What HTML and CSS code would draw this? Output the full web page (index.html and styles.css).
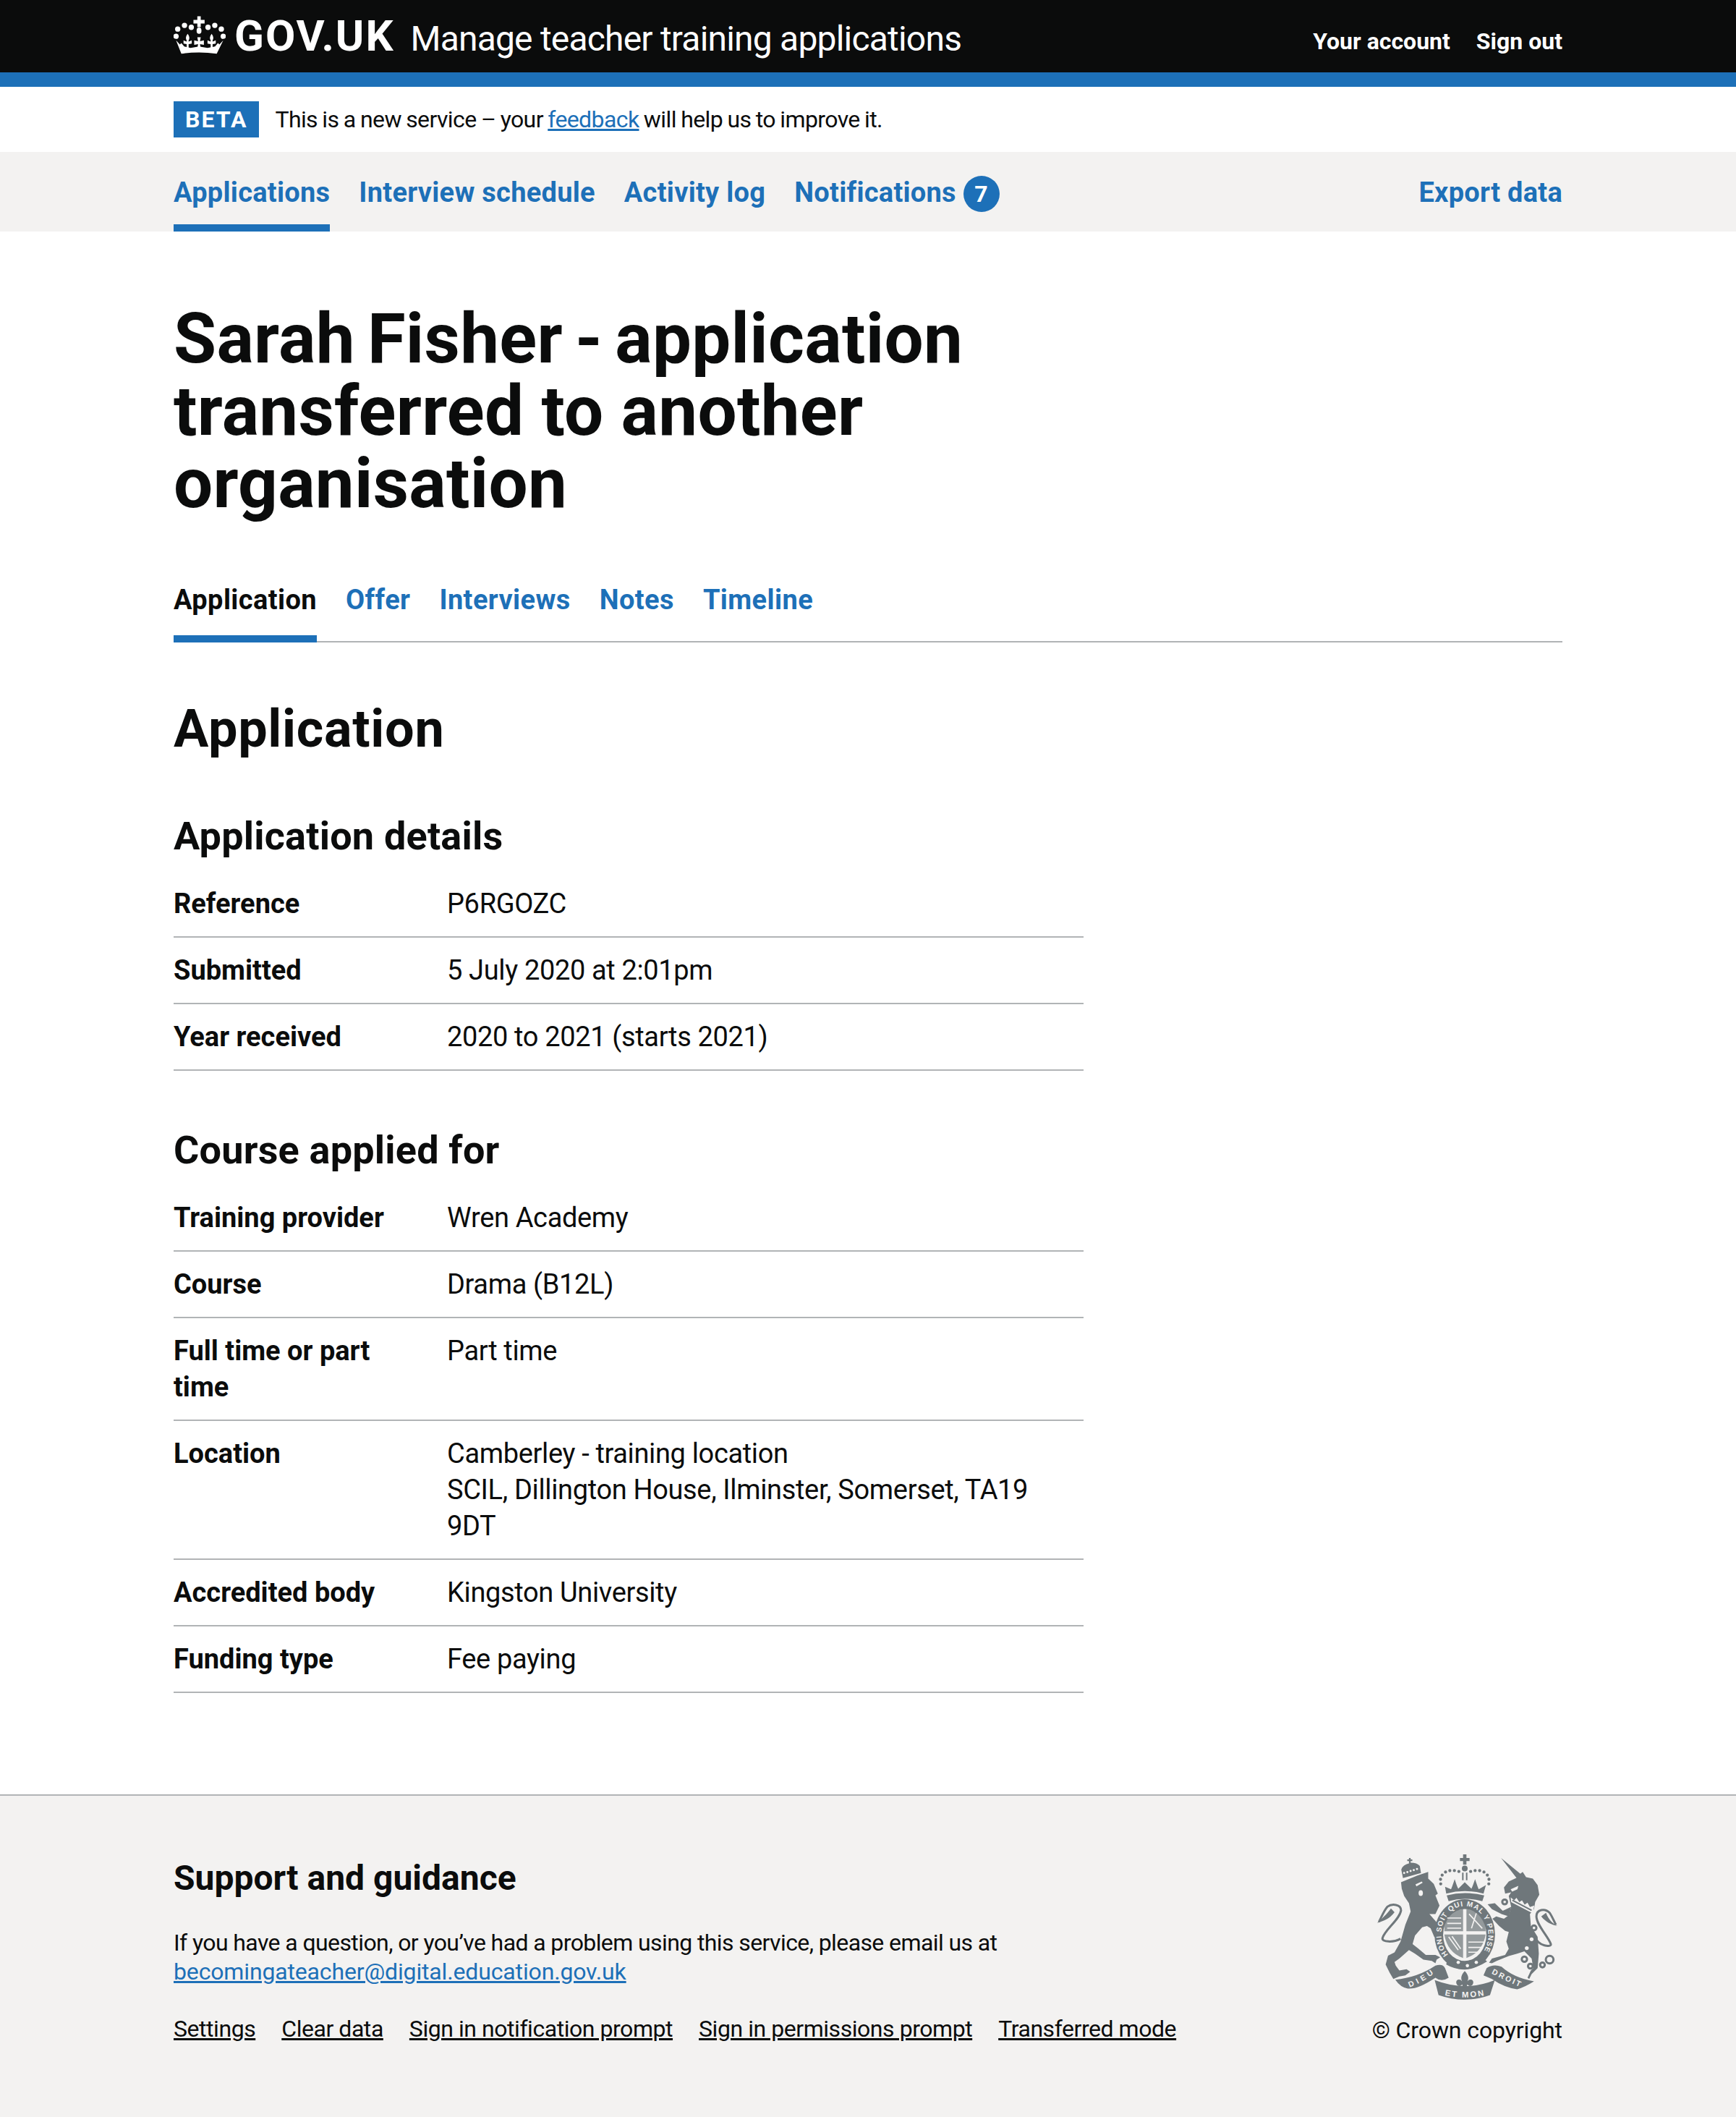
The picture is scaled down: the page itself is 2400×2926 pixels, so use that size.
FILE: index.html
```html
<!DOCTYPE html>
<html lang="en">
<head>
    <meta charset="UTF-8">
    <title>Sarah Fisher - application transferred to another organisation</title>
    <link rel="stylesheet" href="styles.css">
</head>
<body>

    <!-- header -->
    <header class="header">
        <div class="wrap header-inner">
            <a class="logo" href="#">
                <svg class="crown" viewBox="30 25 215 170" width="72" height="57" fill="#fff">
                    <path d="M128 35h14v15h16v15h-16v15h-14V65h-16V50h16z"/>
                    <ellipse cx="135" cy="95" rx="10" ry="13"/>
                    <circle cx="75" cy="73" r="11"/><circle cx="103" cy="81" r="11"/>
                    <circle cx="47" cy="88" r="11"/><circle cx="40" cy="118" r="11"/>
                    <circle cx="172" cy="81" r="11"/><circle cx="200" cy="73" r="11"/>
                    <circle cx="227" cy="88" r="11"/><circle cx="235" cy="118" r="11"/>
                    <path d="M40 135L56 152 62 146 74 160 100 166 135 160 170 166 201 160 213 146 219 152 235 135 208 190Q135 180 62 190Z"/>
                    <path d="M88 108C96 118 97 128 92 135V140L105 135V148L92 150V170H84V150L71 148V135L84 140V135C79 128 80 118 88 108Z"/>
                    <path d="M187 108C195 118 196 128 191 135V140L204 135V148L191 150V170H183V150L170 148V135L183 140V135C178 128 179 118 187 108Z"/>
                    <path d="M128 122h14l-3 16 16-3v18l-16-3 3 18h-14l3-18-16 3v-18l16 3z"/>
                </svg>
                <span class="logo-text">GOV.UK</span>
            </a>
            <a class="service-name" href="#">Manage teacher training applications</a>
            <nav class="account-nav">
                <a href="#">Your account</a>
                <a href="#">Sign out</a>
            </nav>
        </div>
    </header>

    <!-- phase banner -->
    <div class="wrap phase">
        <strong class="tag">BETA</strong>
        <span class="phase-text">This is a new service – your <a href="#">feedback</a> will help us to improve it.</span>
    </div>

    <!-- primary nav -->
    <div class="primary-nav">
        <div class="wrap primary-inner">
            <a class="nav-item current" href="#">Applications</a>
            <a class="nav-item" href="#">Interview schedule</a>
            <a class="nav-item" href="#">Activity log</a>
            <a class="nav-item" href="#">Notifications <span class="count">7</span></a>
            <a class="nav-item export" href="#">Export data</a>
        </div>
    </div>

    <main class="wrap main">
        <h1><span class="title-first">Sarah Fisher - application</span> transferred to another organisation</h1>

        <nav class="sub-nav">
            <a class="current" href="#">Application</a>
            <a href="#">Offer</a>
            <a href="#">Interviews</a>
            <a href="#">Notes</a>
            <a href="#">Timeline</a>
        </nav>

        <h2 class="page-heading">Application</h2>

        <h3>Application details</h3>
        <dl class="summary">
            <div class="row"><dt>Reference</dt><dd>P6RGOZC</dd></div>
            <div class="row"><dt>Submitted</dt><dd>5 July 2020 at 2:01pm</dd></div>
            <div class="row"><dt>Year received</dt><dd>2020 to 2021 (starts 2021)</dd></div>
        </dl>

        <h3>Course applied for</h3>
        <dl class="summary">
            <div class="row"><dt>Training provider</dt><dd>Wren Academy</dd></div>
            <div class="row"><dt>Course</dt><dd>Drama (B12L)</dd></div>
            <div class="row"><dt>Full time or part time</dt><dd>Part time</dd></div>
            <div class="row"><dt>Location</dt><dd>Camberley - training location<br>SCIL, Dillington House, Ilminster, Somerset, TA19 9DT</dd></div>
            <div class="row"><dt>Accredited body</dt><dd>Kingston University</dd></div>
            <div class="row"><dt>Funding type</dt><dd>Fee paying</dd></div>
        </dl>
    </main>

    <!-- footer -->
    <footer class="footer">
        <div class="wrap footer-inner">
            <div class="footer-main">
                <h2>Support and guidance</h2>
                <p>If you have a question, or you’ve had a problem using this service, please email us at <a class="mail" href="#">becomingateacher@digital.education.gov.uk</a></p>
                <ul class="footer-links">
                    <li><a href="#">Settings</a></li>
                    <li><a href="#">Clear data</a></li>
                    <li><a href="#">Sign in notification prompt</a></li>
                    <li><a href="#">Sign in permissions prompt</a></li>
                    <li><a href="#">Transferred mode</a></li>
                </ul>
            </div>
            <div class="copyright">
                <!-- royal arms, traced in the coordinates of a 3x crop -->
                <svg class="crest" viewBox="130 125 752 612" width="250" height="204">
                    <g fill="#6f777b">
                        <!-- lion -->
                        <path d="M232 243L300 215 345 200V228L368 250 385 290 375 298 392 340 375 375H350L385 415 405 470 385 480 370 470 355 435 340 425 320 430 290 465 280 500 305 520 335 545H375L395 555 380 565 375 580 360 570 325 565 290 540 265 525 225 560 205 575 210 590 225 610 255 605 270 615 250 630 225 635 200 645 185 620 168 585 178 548 205 535 230 490 250 420 272 365 265 330 245 300 235 270Z"/>
                        <path d="M240 226L233 190Q240 170 265 165V155H258V148H265V142H272V148H279V155H272V162Q298 162 310 175L315 205Z"/>
                        <!-- crown over the shield -->
                        <path d="M490 127H504V142H517V155H504V170H490V155H477V142H490Z"/>
                        <circle cx="497" cy="186" r="12"/>
                        <path d="M486 203H492V235H486ZM502 203H508V235H502Z"/>
                        <path d="M415 262L440 272C446 258 450 245 455 230 460 245 464 258 470 270L497 243 525 270C530 258 535 245 540 230 545 245 549 258 555 272L585 255 575 290Q497 270 420 290Z"/>
                        <path d="M422 298Q497 278 578 298L570 322Q497 302 430 322Z"/>
                        <!-- garter ring -->
                        <ellipse cx="497" cy="460" rx="126" ry="146"/>
                        <path d="M425 560Q497 610 575 560L590 572Q497 630 420 585Z"/>
                        <!-- scrolls -->
                        <path d="M208 648Q300 640 375 590 405 580 415 600L430 640Q400 660 375 640 300 690 260 685 230 680 208 648Z"/>
                        <path d="M575 630L588 600Q615 582 650 594 700 640 785 655 745 680 715 688 660 680 610 645Z"/>
                        <path d="M372 650L388 712Q497 750 602 712L622 650Q500 700 372 650Z"/>
                        <path d="M497 612C512 628 515 642 508 655 518 640 540 648 530 668 524 678 512 675 508 668L503 682H491L486 668C482 675 470 678 464 668 454 648 476 640 486 655 479 642 482 628 497 612Z"/>
                        <!-- unicorn -->
                        <path d="M648 142L728 208 738 200 752 222 780 228 800 255 807 295 790 325 785 355 768 375 772 425 800 470 805 540 800 600 775 625 765 645 758 640 772 610 782 600 775 560 745 530 715 540 680 550 630 570 610 580 598 578 610 560 665 545 680 520 670 490 680 450 665 445 640 425 612 395 628 385 660 395 680 380 690 345 680 300 690 285 665 290 660 265 680 240 712 225Z"/>
                        <path d="M592 335L622 330 655 362 690 345 680 385 650 375 610 355Z"/>
                    </g>
                    <!-- tails, chain and crown beads -->
                    <g fill="none" stroke="#6f777b" stroke-width="9">
                        <path d="M230 478C200 495 150 492 155 475 165 440 225 400 232 360 232 335 195 330 175 345 160 362 150 390 140 408"/>
                        <path d="M790 470C800 510 860 515 855 500 845 470 795 420 795 385 795 355 830 350 850 370 862 388 868 405 876 420"/>
                        <circle cx="663" cy="325" r="10"/><circle cx="650" cy="410" r="10"/>
                        <circle cx="785" cy="433" r="10"/><circle cx="745" cy="563" r="11"/>
                        <circle cx="770" cy="592" r="10"/><circle cx="820" cy="587" r="10"/>
                        <circle cx="850" cy="565" r="16"/>
                    </g>
                    <path d="M397 250C388 205 430 178 490 205M597 250C606 205 564 178 504 205" fill="none" stroke="#6f777b" stroke-width="13" stroke-linecap="round" stroke-dasharray="0 19"/>
                    <path d="M133 412C150 395 175 375 190 352L205 368C185 395 160 405 133 412ZM882 425C865 415 845 400 835 370L815 385C835 410 860 420 882 425Z" fill="#6f777b"/>
                    <!-- details cut out of the shapes -->
                    <g fill="#f3f2f1">
                        <ellipse cx="314" cy="288" rx="9" ry="12"/>
                        <path d="M292 252L318 240 322 245 296 260ZM688 272L720 258 716 272 694 282Z"/>
                        <circle cx="775" cy="480" r="8"/><circle cx="755" cy="517" r="8"/>
                        <ellipse cx="497" cy="462" rx="90" ry="108"/>
                    </g>
                    <path d="M688 306L703 318 712 308 724 326 735 318 746 336 758 328 768 346 786 340 780 372 690 326Z" fill="#f3f2f1"/>
                    <path d="M695 318L775 360" fill="none" stroke="#6f777b" stroke-width="6"/>
                    <path d="M245 205L305 186" fill="none" stroke="#f3f2f1" stroke-width="9" stroke-linecap="round" stroke-dasharray="0 14"/>
                    <path d="M418 380Q450 358 490 355V447H412Q412 410 418 380ZM504 355Q545 358 578 380 584 410 584 447H504ZM412 460H490V558Q425 535 412 460ZM504 460H584Q570 535 504 558Z" fill="#6f777b" opacity=".72"/>
                    <g fill="none" stroke="#f3f2f1" stroke-width="5">
                        <path d="M424 392H482M424 414H482M424 434H482M512 492H576M512 514H572M512 534H556"/>
                        <path d="M430 470L470 525M444 468L480 520M515 375L570 435M545 372L525 435"/>
                    </g>
                    <g fill="#f3f2f1">
                        <circle cx="470" cy="576" r="7"/><circle cx="508" cy="590" r="7"/><circle cx="545" cy="576" r="7"/>
                    </g>
                    <!-- lettering -->
                    <path id="garter" d="M428 544A98 118 0 1 1 566 544" fill="none"/>
                    <path id="scroll-left" d="M268 680Q320 660 372 620" fill="none"/>
                    <path id="scroll-right" d="M608 622Q660 650 730 680" fill="none"/>
                    <path id="scroll-mid" d="M392 708Q497 736 602 708" fill="none"/>
                    <g class="crest-text">
                        <text font-size="30"><textPath href="#garter" textLength="500">HONI SOIT QUI MAL Y PENSE</textPath></text>
                        <text font-size="32"><textPath href="#scroll-left" textLength="115">DIEU</textPath></text>
                        <text font-size="32"><textPath href="#scroll-right" textLength="130">DROIT</textPath></text>
                        <text font-size="34"><textPath href="#scroll-mid" startOffset="22" textLength="165">ET MON</textPath></text>
                    </g>
                </svg>
                <span class="copy-text">© Crown copyright</span>
            </div>
        </div>
    </footer>

</body>
</html>
```

FILE: styles.css
```css
* {
    box-sizing: border-box;
}
body {
    font-family: Roboto, Arial, sans-serif;
    font-size: 38px;
    line-height: 50px;
    color: #0b0c0c;
    margin: 0;
    background-color: #fff;
}
a {
    color: #1d70b8;
}
.wrap {
    width: 1920px;
    margin: 0 auto;
}

/* header */
.header {
    height: 120px;
    background-color: #0b0c0c;
    border-bottom: 20px solid #1d70b8;
}
.header-inner {
    display: flex;
    align-items: center;
    height: 100px;
}
.header a {
    color: #fff;
    text-decoration: none;
}
.logo {
    display: flex;
    align-items: center;
    margin-right: 22px;
}
.crown {
    margin-right: 12px;
    margin-bottom: 6px;
}
.logo-text {
    font-size: 60px;
    font-weight: 700;
    letter-spacing: 2px;
}
.service-name {
    font-size: 48px;
    letter-spacing: -.8px;
    padding-top: 8px;
}
.account-nav {
    margin-left: auto;
    display: flex;
    gap: 36px;
    font-size: 32px;
    font-weight: 700;
    padding-top: 14px;
}

/* phase banner */
.phase {
    display: flex;
    align-items: center;
    height: 90px;
    font-size: 32px;
}
.phase-text {
    letter-spacing: -.6px;
    word-spacing: -1px;
}
.tag {
    background-color: #1d70b8;
    color: #fff;
    font-size: 32px;
    line-height: 50px;
    padding: 0 16px;
    letter-spacing: 2px;
    margin-right: 22px;
}

/* primary nav */
.primary-nav {
    height: 110px;
    background-color: #f3f2f1;
}
.primary-inner {
    display: flex;
    height: 110px;
    gap: 40px;
}
.nav-item {
    display: block;
    font-weight: 700;
    letter-spacing: .27px;
    text-decoration: none;
    padding-top: 31px;
    height: 110px;
}
.nav-item.current {
    border-bottom: 10px solid #1d70b8;
}
.export {
    margin-left: auto;
}
.count {
    display: inline-block;
    width: 50px;
    height: 50px;
    border-radius: 50%;
    background-color: #1d70b8;
    color: #fff;
    font-size: 32px;
    line-height: 50px;
    text-align: center;
}

/* main */
.main {
    padding-top: 98px;
    padding-bottom: 60px;
}
h1 {
    font-size: 96px;
    line-height: 100px;
    font-weight: 700;
    letter-spacing: .3px;
    width: 1260px;
    margin: 0 0 85px;
}
.title-first {
    display: block;
    word-spacing: -7px;
}
.sub-nav {
    display: flex;
    gap: 40px;
    height: 85px;
    border-bottom: 2px solid #b1b4b6;
    font-weight: 700;
    letter-spacing: .4px;
    margin-bottom: 80px;
}
.sub-nav a {
    display: block;
    height: 85px;
    padding-top: 1px;
    text-decoration: none;
}
.sub-nav a.current {
    color: #0b0c0c;
    border-bottom: 10px solid #1d70b8;
}
.page-heading {
    font-size: 72px;
    line-height: 80px;
    font-weight: 700;
    letter-spacing: .7px;
    margin: 0 0 78px;
}
h3 {
    font-size: 54px;
    line-height: 60px;
    font-weight: 700;
    letter-spacing: .2px;
    margin: 0 0 18px;
}
.summary {
    width: 1258px;
    margin: 0 0 80px;
}
.row {
    display: flex;
    border-bottom: 2px solid #b1b4b6;
    padding: 20px 0 20px;
}
dt {
    width: 378px;
    padding-right: 40px;
    font-weight: 700;
}
dd {
    flex: 1;
    margin: 0;
    padding-right: 40px;
    letter-spacing: -.35px;
}

/* footer */
.footer {
    background-color: #f3f2f1;
    border-top: 2px solid #b1b4b6;
    height: 446px;
    padding-top: 84px;
    font-size: 32px;
    line-height: 40px;
}
.footer-inner {
    display: flex;
    justify-content: space-between;
}
.footer h2 {
    font-size: 48px;
    line-height: 60px;
    margin: 0 0 39px;
}
.footer p {
    margin: 0 0 39px;
    width: 1260px;
    letter-spacing: -.6px;
}
.footer a {
    color: #0b0c0c;
}
.footer a.mail {
    display: block;
    color: #1d70b8;
    letter-spacing: -.15px;
}
.footer-links {
    display: flex;
    gap: 36px;
    list-style: none;
    margin: 0;
    padding: 0;
    letter-spacing: -.45px;
}
.copyright {
    display: flex;
    flex-direction: column;
    align-items: flex-end;
    margin-top: -4px;
}
.copy-text {
    letter-spacing: -.1px;
}
.crest {
    margin-right: 7px;
    margin-bottom: 20px;
}
.crest-text {
    fill: #f3f2f1;
    font-family: "Liberation Sans", Arial, sans-serif;
    font-weight: 700;
}
```
